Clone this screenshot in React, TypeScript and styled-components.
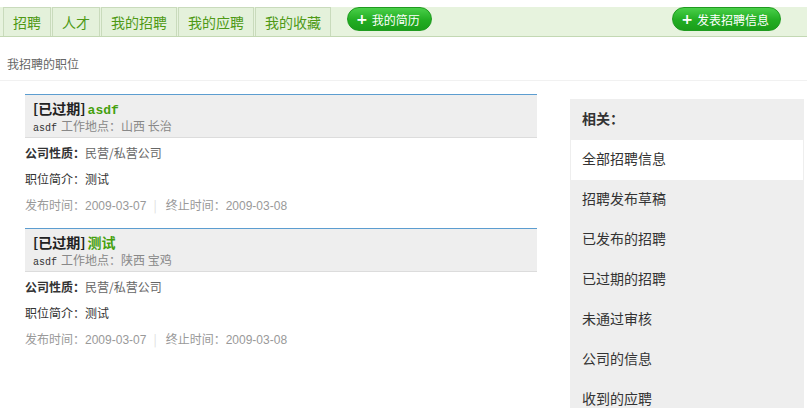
import React from "react";
import styled, { createGlobalStyle } from "styled-components";

const Global = createGlobalStyle`
  html, body { margin: 0; padding: 0; background: #fff; }
  body { font-family: "Liberation Sans", "Noto Sans CJK SC", sans-serif; font-size: 12px; color: #333; }
`;

const Nav = styled.div`
  margin-top: 7px;
  height: 29px;
  background: #e7f3de;
  border-bottom: 1px solid #c3d8b3;
  display: flex;
  align-items: flex-start;
  padding-left: 3px;
`;

const Tabs = styled.div`
  display: flex;
  gap: 1px;
  height: 29px;
`;

const Tab = styled.a`
  display: flex;
  align-items: center;
  height: 28px;
  padding: 0 9px;
  border: 1px solid #c9dbbc;
  border-bottom: none;
  background: #e4f1db;
  color: #4f9a16;
  font-size: 14px;
  font-family: "Noto Sans CJK SC", sans-serif;
  cursor: pointer;
`;

const Pill = styled.a<{ $right?: boolean }>`
  display: flex;
  align-items: center;
  gap: 4px;
  height: 22px;
  padding: 0 11px 0 8px;
  margin-left: ${(p) => (p.$right ? "auto" : "16px")};
  margin-right: ${(p) => (p.$right ? "26px" : "0")};
  border: 1px solid #1f9b1f;
  border-radius: 12px;
  background: linear-gradient(#49cf49, #22ad22 55%, #1a9e1a);
  color: #fff;
  font-size: 12px;
  font-family: "Noto Sans CJK SC", sans-serif;
  cursor: pointer;
`;

const Plus = styled.span`
  font-family: "DejaVu Sans", sans-serif;
  font-weight: bold;
  font-size: 14px;
  line-height: 1;
`;

const PageTitle = styled.div`
  padding: 20px 0 9px 7px;
  line-height: 14px;
  color: #666;
  font-family: "Noto Sans CJK SC", sans-serif;
  border-bottom: 1px solid #f1f1f1;
`;

const Main = styled.div`
  display: flex;
  align-items: flex-start;
`;

const JobList = styled.div`
  width: 512px;
  margin-left: 25px;
  padding-top: 13px;
`;

const Card = styled.div`
  margin-bottom: 10px;
`;

const CardHead = styled.div`
  border-top: 1px solid #5c9dd0;
  border-bottom: 1px solid #dcdcdc;
  background: #eeeeee;
  padding: 3px 0 4px 8px;
`;

const Title = styled.div`
  height: 20px;
  line-height: 20px;
  font-size: 14px;
  font-weight: bold;
  color: #222;
  font-family: "Noto Sans CJK SC", sans-serif;
  overflow: hidden;
`;

const TitleLink = styled.span<{ $mono?: boolean }>`
  color: #44a00c;
  margin-left: 2px;
  font-family: ${(p) => (p.$mono ? '"Liberation Mono", monospace' : '"Noto Sans CJK SC", sans-serif')};
  font-size: ${(p) => (p.$mono ? "13px" : "14px")};
`;

const Sub = styled.div`
  height: 15px;
  line-height: 15px;
  color: #888;
  font-family: "Noto Sans CJK SC", sans-serif;
  overflow: hidden;
`;

const Mono = styled.span`
  font-family: "Liberation Mono", monospace;
  font-size: 10px;
  color: #333;
  margin-right: 4px;
`;

const Fields = styled.div`
  padding-top: 2px;
`;

const Field = styled.div`
  height: 26px;
  line-height: 26px;
  font-family: "Noto Sans CJK SC", sans-serif;
  color: #666;
`;

const Label = styled.b<{ $plain?: boolean }>`
  color: #333;
  font-weight: ${(p) => (p.$plain ? "normal" : "bold")};
`;

const Meta = styled.div`
  height: 26px;
  line-height: 26px;
  color: #999;
  font-family: "Noto Sans CJK SC", sans-serif;
`;

const DateText = styled.span`
  font-family: "Liberation Sans", sans-serif;
`;

const Sep = styled.span`
  color: #ddd;
  margin: 0 9px 0 7px;
`;

const Side = styled.div`
  width: 234px;
  margin-left: 33px;
  margin-top: 18px;
  background: #eeeeee;
`;

const SideHead = styled.div`
  height: 41px;
  line-height: 39px;
  padding-left: 12px;
  font-size: 14px;
  font-weight: bold;
  color: #333;
  font-family: "Noto Sans CJK SC", sans-serif;
`;

const SideItem = styled.a<{ $active?: boolean }>`
  display: block;
  height: 40px;
  line-height: 36px;
  margin: 0 1px;
  padding-left: 11px;
  font-size: 14px;
  color: #333;
  background: ${(p) => (p.$active ? "#fff" : "transparent")};
  font-family: "Noto Sans CJK SC", sans-serif;
  cursor: pointer;
`;

const jobs = [
  { title: "asdf", mono: true, place: "山西 长治" },
  { title: "测试", mono: false, place: "陕西 宝鸡" },
];

const sideItems = [
  "全部招聘信息",
  "招聘发布草稿",
  "已发布的招聘",
  "已过期的招聘",
  "未通过审核",
  "公司的信息",
  "收到的应聘",
];

export default function App() {
  return (
    <>
      <Global />
      <Nav>
        <Tabs>
          {["招聘", "人才", "我的招聘", "我的应聘", "我的收藏"].map((t) => (
            <Tab key={t}>{t}</Tab>
          ))}
        </Tabs>
        <Pill>
          <Plus>+</Plus>我的简历
        </Pill>
        <Pill $right>
          <Plus>+</Plus>发表招聘信息
        </Pill>
      </Nav>
      <PageTitle>我招聘的职位</PageTitle>
      <Main>
        <JobList>
          {jobs.map((j, i) => (
            <Card key={i}>
              <CardHead>
                <Title>
                  [已过期]<TitleLink $mono={j.mono}>{j.title}</TitleLink>
                </Title>
                <Sub>
                  <Mono>asdf</Mono>工作地点：{j.place}
                </Sub>
              </CardHead>
              <Fields>
                <Field>
                  <Label>公司性质：</Label>民营/私营公司
                </Field>
                <Field>
                  <Label $plain>职位简介：测试</Label>
                </Field>
                <Meta>
                  发布时间：<DateText>2009-03-07</DateText>
                  <Sep>|</Sep>终止时间：<DateText>2009-03-08</DateText>
                </Meta>
              </Fields>
            </Card>
          ))}
        </JobList>
        <Side>
          <SideHead>相关：</SideHead>
          {sideItems.map((s, i) => (
            <SideItem key={s} $active={i === 0}>
              {s}
            </SideItem>
          ))}
        </Side>
      </Main>
    </>
  );
}
